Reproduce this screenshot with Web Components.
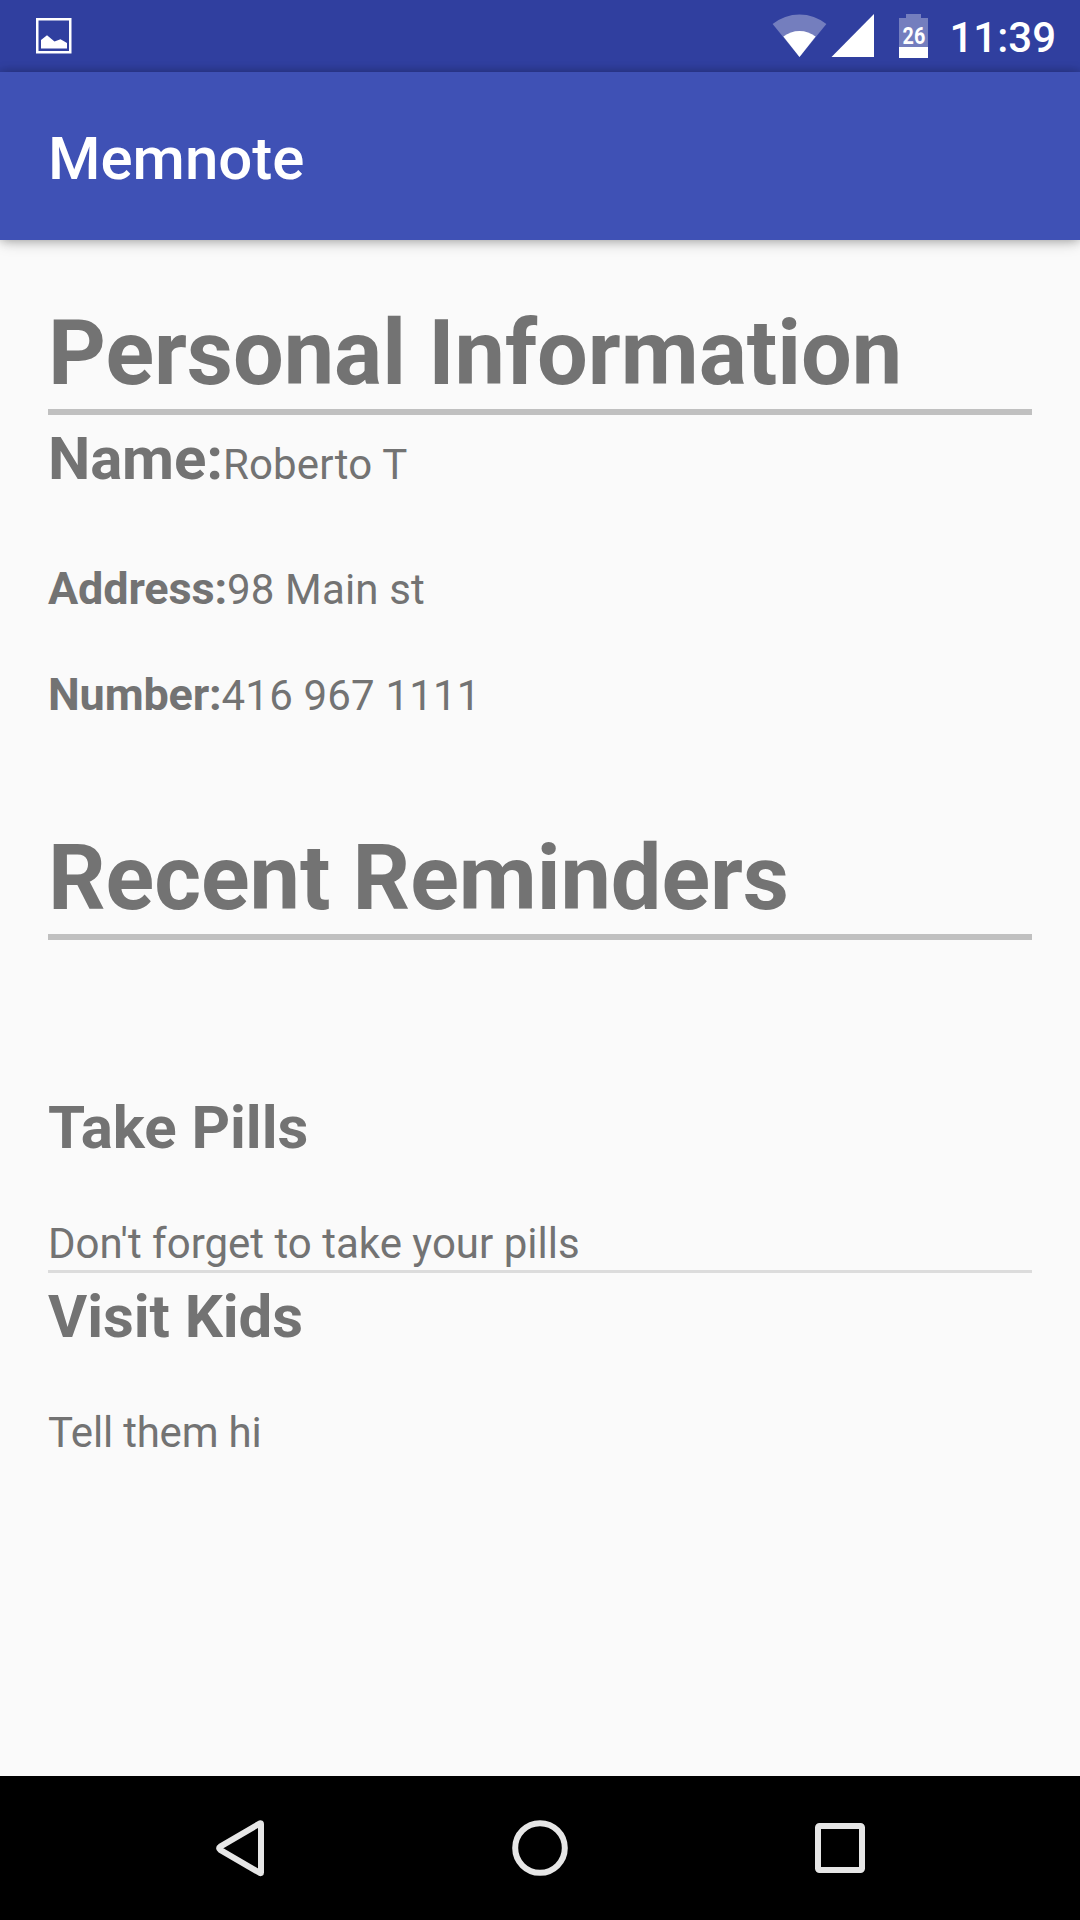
<!DOCTYPE html>
<html lang="en">
<head>
<meta charset="utf-8">
<title>Memnote</title>
<style>
    html, body {
        margin: 0;
        padding: 0;
        height: 100%;
        background: #fafafa;
    }
</style>
</head>
<body>
<memnote-app>
    <status-bar slot="status">11:39</status-bar>
    <app-bar slot="header">Memnote</app-bar>
    <note-section>
        <span slot="title">Personal Information</span>
        <info-row style="--label-size: 60px; --label-line: 70px; margin-top: 9px;">
            <span slot="label">Name:</span>Roberto T
        </info-row>
        <info-row style="margin-top: 68px;"><span slot="label">Address:</span>98 Main st</info-row>
        <info-row style="margin-top: 52px;"><span slot="label">Number:</span>416 967 1111</info-row>
    </note-section>
    <note-section style="margin-top: 104px;">
        <span slot="title">Recent Reminders</span>
        <reminder-list>
            <reminder-item><span slot="title">Take Pills</span>Don't forget to take your pills</reminder-item>
            <reminder-item style="--text-spacing: -.2px;"><span slot="title">Visit Kids</span>Tell them hi</reminder-item>
        </reminder-list>
    </note-section>
    <navigation-bar slot="navigation"></navigation-bar>
</memnote-app>

<script>
// memnote-app
const memnoteAppTemplate = document.createElement("template");
memnoteAppTemplate.innerHTML = /*html*/`
    <style>
        :host {
            display: flex;
            flex-direction: column;
            width: 1080px;
            height: 1920px;
            overflow: hidden;
            background: #fafafa;
            color: #737373;
            font-family: Roboto, sans-serif;
        }
        main {
            flex: 1;
            padding: 61px 48px 0;
        }
    </style>
    <slot name="status"></slot>
    <slot name="header"></slot>
    <main><slot></slot></main>
    <slot name="navigation"></slot>
`;

class MemnoteApp extends HTMLElement {
    constructor() {
        super();
        this.attachShadow({mode: "open"});
        this.shadowRoot.appendChild(memnoteAppTemplate.content.cloneNode(true));
    }
}
window.customElements.define("memnote-app", MemnoteApp);

// status-bar
const statusBarTemplate = document.createElement("template");
statusBarTemplate.innerHTML = /*html*/`
    <style>
        :host {
            display: flex;
            height: 72px;
            background: #303f9f;
            color: white;
            font-size: 42px;
            font-weight: 500;
            line-height: 75px;
        }
        svg {
            display: block;
            flex: none;
        }
        .picture {
            margin-left: 30px;
            margin-right: auto;
        }
        .battery {
            margin-left: 16px;
        }
        .time {
            margin-left: 15px;
            margin-right: 24px;
        }
        text {
            font-size: 23px;
            font-weight: 700;
        }
    </style>
    <svg class="picture" width="48" height="72" viewBox="30 0 48 72">
        <rect x="37.25" y="19.25" width="33" height="33" fill="none" stroke="#fff" stroke-width="2.5"/>
        <path d="M41 40L47 35.3L54.5 41.6L60.5 39.3L67 43V48.6H41Z" fill="#fff"/>
    </svg>
    <svg width="108" height="72" viewBox="770 0 108 72">
        <path d="M799.5 57L772.6 24A43 43 0 0 1 826.4 24Z" fill="#fff" fill-opacity=".33"/>
        <path d="M799.5 57L783.4 36.5A26 26 0 0 1 815.6 36.5Z" fill="#fff"/>
        <path d="M831.5 57H874V14Z" fill="#fff"/>
    </svg>
    <svg class="battery" width="40" height="72" viewBox="894 0 40 72">
        <path d="M899 47V18H906V14H921V18H928V47Z" fill="#fff" fill-opacity=".33"/>
        <path d="M899 47H928V58H899Z" fill="#fff"/>
        <text fill="#fff" transform="translate(902.6 44) scale(.86 1)">26</text>
    </svg>
    <span class="time"><slot></slot></span>
`;

class StatusBar extends HTMLElement {
    constructor() {
        super();
        this.attachShadow({mode: "open"});
        this.shadowRoot.appendChild(statusBarTemplate.content.cloneNode(true));
    }
}
window.customElements.define("status-bar", StatusBar);

// app-bar
const appBarTemplate = document.createElement("template");
appBarTemplate.innerHTML = /*html*/`
    <style>
        :host {
            display: flex;
            align-items: center;
            position: relative;
            box-sizing: border-box;
            height: 168px;
            padding: 6px 48px 0;
            background: #3f51b5;
            color: white;
            font-size: 60px;
            font-weight: 500;
            line-height: 70px;
            box-shadow: 0 5px 14px -2px rgba(0, 0, 0, .16), 0 0 10px rgba(0, 0, 0, .28);
        }
    </style>
    <slot></slot>
`;

class AppBar extends HTMLElement {
    constructor() {
        super();
        this.attachShadow({mode: "open"});
        this.shadowRoot.appendChild(appBarTemplate.content.cloneNode(true));
    }
}
window.customElements.define("app-bar", AppBar);

// note-section
const noteSectionTemplate = document.createElement("template");
noteSectionTemplate.innerHTML = /*html*/`
    <style>
        :host {
            display: block;
        }
        h1 {
            margin: 0;
            padding-bottom: 3px;
            border-bottom: 6px solid #c0c0c0;
            font-size: 90px;
            line-height: 105px;
            font-weight: 700;
            letter-spacing: -.06px;
            white-space: nowrap;
        }
    </style>
    <h1><slot name="title"></slot></h1>
    <slot></slot>
`;

class NoteSection extends HTMLElement {
    constructor() {
        super();
        this.attachShadow({mode: "open"});
        this.shadowRoot.appendChild(noteSectionTemplate.content.cloneNode(true));
    }
}
window.customElements.define("note-section", NoteSection);

// info-row
const infoRowTemplate = document.createElement("template");
infoRowTemplate.innerHTML = /*html*/`
    <style>
        :host {
            display: flex;
            align-items: baseline;
            font-size: 42px;
            line-height: 50px;
            letter-spacing: .17px;
        }
        b {
            font-size: var(--label-size, 45px);
            line-height: var(--label-line, 54px);
            font-weight: 700;
            letter-spacing: -.16px;
        }
    </style>
    <b><slot name="label"></slot></b>
    <span><slot></slot></span>
`;

class InfoRow extends HTMLElement {
    constructor() {
        super();
        this.attachShadow({mode: "open"});
        this.shadowRoot.appendChild(infoRowTemplate.content.cloneNode(true));
    }
}
window.customElements.define("info-row", InfoRow);

// reminder-list
const reminderListTemplate = document.createElement("template");
reminderListTemplate.innerHTML = /*html*/`
    <style>
        :host {
            display: block;
            margin-top: 153px;
        }
        ::slotted(reminder-item:not(:last-child)) {
            padding-bottom: 1px;
            border-bottom: 3px solid #dcdcdc;
            margin-bottom: 9px;
        }
    </style>
    <slot></slot>
`;

class ReminderList extends HTMLElement {
    constructor() {
        super();
        this.attachShadow({mode: "open"});
        this.shadowRoot.appendChild(reminderListTemplate.content.cloneNode(true));
    }
}
window.customElements.define("reminder-list", ReminderList);

// reminder-item
const reminderItemTemplate = document.createElement("template");
reminderItemTemplate.innerHTML = /*html*/`
    <style>
        :host {
            display: flex;
            flex-direction: column;
            gap: 56px;
        }
        h2, p {
            margin: 0;
        }
        h2 {
            font-size: 60px;
            line-height: 70px;
            font-weight: 700;
            letter-spacing: -.05px;
        }
        p {
            font-size: 42px;
            line-height: 50px;
            letter-spacing: var(--text-spacing, normal);
        }
    </style>
    <h2><slot name="title"></slot></h2>
    <p><slot></slot></p>
`;

class ReminderItem extends HTMLElement {
    constructor() {
        super();
        this.attachShadow({mode: "open"});
        this.shadowRoot.appendChild(reminderItemTemplate.content.cloneNode(true));
    }
}
window.customElements.define("reminder-item", ReminderItem);

// navigation-bar
const navigationBarTemplate = document.createElement("template");
navigationBarTemplate.innerHTML = /*html*/`
    <style>
        :host {
            display: grid;
            grid-template-columns: repeat(3, 300px);
            place-content: center;
            place-items: center;
            height: 144px;
            background: black;
        }
        svg {
            display: block;
            fill: none;
            stroke: #e6e6e6;
            stroke-width: 6;
            stroke-linejoin: round;
        }
    </style>
    <svg width="72" height="72"><path d="M16.2 34.7L56 11.3Q57 11 57 12V60.5Q57 61.5 56 61L16.2 37.8Q14 36.2 16.2 34.7Z"/></svg>
    <svg width="72" height="72"><circle cx="36" cy="36" r="24.8"/></svg>
    <svg width="72" height="72"><rect x="14" y="14" width="44" height="44" rx="1.5"/></svg>
`;

class NavigationBar extends HTMLElement {
    constructor() {
        super();
        this.attachShadow({mode: "open"});
        this.shadowRoot.appendChild(navigationBarTemplate.content.cloneNode(true));
    }
}
window.customElements.define("navigation-bar", NavigationBar);
</script>
</body>
</html>
